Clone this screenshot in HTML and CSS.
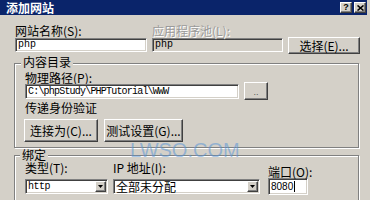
FILE: index.html
```html
<!DOCTYPE html>
<html>
<head>
<meta charset="utf-8">
<title>添加网站</title>
<link rel="stylesheet" href="styles.css">
</head>
<body>
<div class="window">
  <div class="titlebar">
    <span class="title">添加网站</span>
    <div class="caption-btns">
      <span class="cbtn help">?</span>
      <span class="cbtn close"><svg width="7" height="6" viewBox="0 0 7 6"><path d="M0.5 0.5 L6.5 5.5 M6.5 0.5 L0.5 5.5" stroke="#000" stroke-width="1.6" fill="none"/></svg></span>
    </div>
  </div>

  <div class="site-row">
    <div class="field name">
      <div class="label">网站名称(S):</div>
      <div class="textbox mono">php</div>
    </div>
    <div class="field pool">
      <div class="label disabled">应用程序池(L):</div>
      <div class="textbox readonly mono">php</div>
    </div>
    <div class="button select">选择(E)...</div>
  </div>

  <div class="group dir">
    <div class="legend">内容目录</div>
    <div class="label">物理路径(P):</div>
    <div class="path-row">
      <div class="textbox path mono">C:\phpStudy\PHPTutorial\WWW</div>
      <div class="button browse">..</div>
    </div>
    <div class="label note">传递身份验证</div>
    <div class="btn-row">
      <div class="button connect">连接为(C)...</div>
      <div class="button test">测试设置(G)...</div>
    </div>
  </div>

  <div class="group binding">
    <div class="legend">绑定</div>
    <div class="bind-row">
      <div class="field type">
        <div class="label">类型(T):</div>
        <div class="combo"><span class="val mono">http</span><span class="drop"><svg width="5" height="3" viewBox="0 0 5 3"><path d="M0 0 H5 L2.5 3 Z" fill="#000"/></svg></span></div>
      </div>
      <div class="field ip">
        <div class="label">IP 地址(I):</div>
        <div class="combo"><span class="val">全部未分配</span><span class="drop"><svg width="5" height="3" viewBox="0 0 5 3"><path d="M0 0 H5 L2.5 3 Z" fill="#000"/></svg></span></div>
      </div>
      <div class="field port">
        <div class="label">端口(O):</div>
        <div class="textbox portbox"><span class="port-val">8080</span><span class="caret"></span></div>
      </div>
    </div>
  </div>

  <div class="watermark">LWSO.COM</div>
</div>
</body>
</html>
```

FILE: styles.css
```css
* { box-sizing: border-box; }
html, body { margin: 0; padding: 0; }
body {
  width: 370px;
  height: 200px;
  overflow: hidden;
  background: #d4d0c8;
  font-family: "Noto Sans CJK SC", "Noto Sans", sans-serif;
  font-size: 12px;
  color: #000;
}
.window {
  position: relative;
  width: 370px;
  height: 200px;
  overflow: hidden;
  background: #d4d0c8;
}
.titlebar {
  display: flex;
  align-items: center;
  justify-content: space-between;
  width: 367px;
  height: 15px;
  background: #0a246a;
  padding: 0 1px 0 6px;
}
.title {
  color: #fff;
  font-weight: bold;
  font-size: 12px;
  line-height: 15px;
}
.caption-btns { display: flex; gap: 2px; }
.cbtn {
  width: 12px;
  height: 11px;
  background: #d4d0c8;
  border: 1px solid;
  border-color: #fff #404040 #404040 #fff;
  box-shadow: inset -1px -1px 0 #808080;
  display: flex;
  align-items: center;
  justify-content: center;
  font: bold 9px/1 "Liberation Sans", sans-serif;
  color: #000;
}

.label {
  line-height: 12px;
  font-size: 12px;
  white-space: nowrap;
}
.label.disabled {
  color: #9a9a9a;
  text-shadow: 1px 1px 0 #fff;
}
.mono { font-family: "Liberation Mono", monospace; }

.textbox {
  background: #fff;
  border: 1px solid;
  border-color: #808080 #fff #fff #808080;
  box-shadow: inset 1px 1px 0 #404040, inset -1px -1px 0 #d4d0c8;
  padding-left: 2px;
  white-space: nowrap;
  overflow: hidden;
}
.textbox.readonly { background: #d4d0c8; }

.button {
  background: #d4d0c8;
  border: 1px solid;
  border-color: #fff #404040 #404040 #fff;
  box-shadow: inset -1px -1px 0 #808080;
  display: flex;
  align-items: center;
  justify-content: center;
  white-space: nowrap;
  font-size: 12px;
}

/* row 1 */
.site-row {
  display: flex;
  gap: 5px;
  margin: 10px 0 0 15px;
}
.field .label { margin-bottom: 1px; }
.field.name { width: 132px; }
.field.pool { width: 131px; }
.site-row .textbox {
  height: 14px;
  font-size: 10px;
  line-height: 12px;
}
.button.select {
  width: 72px;
  height: 17px;
  margin-top: 12px;
}

/* groups */
.group {
  margin-left: 14px;
  width: 345px;
  border: 1px solid #808080;
  box-shadow: inset 1px 1px 0 #fff, 1px 1px 0 #fff;
  padding-left: 10px;
}
.legend {
  width: fit-content;
  background: #d4d0c8;
  padding: 0 2px;
  line-height: 12px;
  font-size: 12px;
}
.group.dir {
  margin-top: 9px;
  padding-bottom: 5px;
}
.group.dir .legend {
  margin: -8px 0 4px -4px;
}
.path-row {
  display: flex;
  gap: 5px;
}
.textbox.path {
  width: 214px;
  height: 15px;
  font-size: 10px;
  letter-spacing: -0.8px;
  line-height: 13px;
}
.button.browse {
  width: 24px;
  height: 18px;
  margin-top: -2px;
  font: 9px/1 "Liberation Sans", sans-serif;
  color: #555;
  padding-top: 2px;
}
.label.note { margin-top: 2px; }
.btn-row {
  display: flex;
  gap: 6px;
  margin: 5px 0 0 -1px;
}
.button.connect { width: 74px; height: 23px; }
.button.test { width: 79px; height: 23px; }

.group.binding {
  margin-top: 7px;
  height: 46px;
}
.group.binding .legend {
  margin: -7px 0 1px -5px;
}
.bind-row { display: flex; }
.field.type { width: 83px; }
.field.ip { width: 147px; margin-left: 5px; }
.field.port { width: 40px; margin-left: 8px; }
.field.type .label, .field.ip .label { margin-bottom: 5px; }
.field.port .label { margin: 4px 0 0; }

.combo {
  display: flex;
  align-items: center;
  justify-content: space-between;
  height: 15px;
  background: #fff;
  border: 1px solid;
  border-color: #808080 #fff #fff #808080;
  box-shadow: inset 1px 1px 0 #404040, inset -1px -1px 0 #d4d0c8;
  padding: 1px;
}
.combo .val {
  padding-left: 1px;
  font-size: 12px;
  line-height: 11px;
  white-space: nowrap;
}
.combo .val.mono {
  font-size: 10px;
  letter-spacing: -0.5px;
}
.drop {
  width: 11px;
  height: 11px;
  background: #d4d0c8;
  border: 1px solid;
  border-color: #fff #404040 #404040 #fff;
  box-shadow: inset -1px -1px 0 #808080;
  display: flex;
  align-items: center;
  justify-content: center;
}
.textbox.portbox {
  height: 17px;
  display: flex;
  align-items: center;
  padding-left: 2px;
}
.port-val {
  font: 10px/1 "Liberation Sans", sans-serif;
}
.caret {
  width: 1px;
  height: 11px;
  background: #000;
  margin-left: 1px;
}

.watermark {
  position: absolute;
  left: 130px;
  top: 140px;
  font: 20px/20px "Liberation Sans", sans-serif;
  color: rgba(90, 150, 215, 0.55);
  white-space: nowrap;
  pointer-events: none;
}
```
